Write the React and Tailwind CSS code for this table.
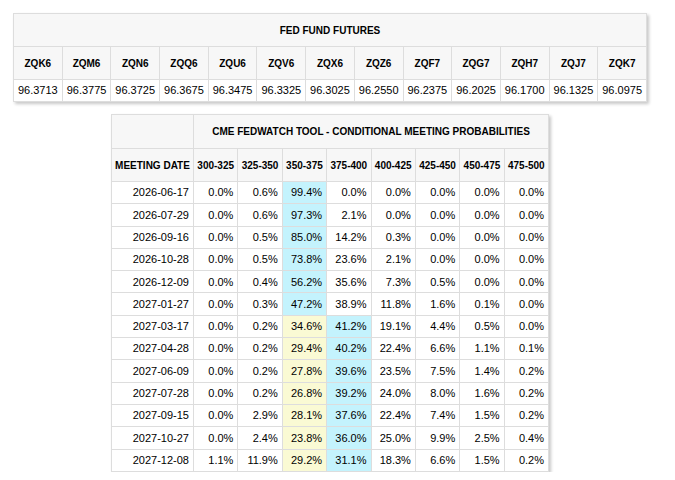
import React from "react";

const futures = [
  ["ZQK6", "96.3713"],
  ["ZQM6", "96.3775"],
  ["ZQN6", "96.3725"],
  ["ZQQ6", "96.3675"],
  ["ZQU6", "96.3475"],
  ["ZQV6", "96.3325"],
  ["ZQX6", "96.3025"],
  ["ZQZ6", "96.2550"],
  ["ZQF7", "96.2375"],
  ["ZQG7", "96.2025"],
  ["ZQH7", "96.1700"],
  ["ZQJ7", "96.1325"],
  ["ZQK7", "96.0975"],
];

const ranges = ["300-325", "325-350", "350-375", "375-400", "400-425", "425-450", "450-475", "475-500"];

const rows = [
  ["2026-06-17", ["0.0", "0.6", "99.4", "0.0", "0.0", "0.0", "0.0", "0.0"]],
  ["2026-07-29", ["0.0", "0.6", "97.3", "2.1", "0.0", "0.0", "0.0", "0.0"]],
  ["2026-09-16", ["0.0", "0.5", "85.0", "14.2", "0.3", "0.0", "0.0", "0.0"]],
  ["2026-10-28", ["0.0", "0.5", "73.8", "23.6", "2.1", "0.0", "0.0", "0.0"]],
  ["2026-12-09", ["0.0", "0.4", "56.2", "35.6", "7.3", "0.5", "0.0", "0.0"]],
  ["2027-01-27", ["0.0", "0.3", "47.2", "38.9", "11.8", "1.6", "0.1", "0.0"]],
  ["2027-03-17", ["0.0", "0.2", "34.6", "41.2", "19.1", "4.4", "0.5", "0.0"]],
  ["2027-04-28", ["0.0", "0.2", "29.4", "40.2", "22.4", "6.6", "1.1", "0.1"]],
  ["2027-06-09", ["0.0", "0.2", "27.8", "39.6", "23.5", "7.5", "1.4", "0.2"]],
  ["2027-07-28", ["0.0", "0.2", "26.8", "39.2", "24.0", "8.0", "1.6", "0.2"]],
  ["2027-09-15", ["0.0", "2.9", "28.1", "37.6", "22.4", "7.4", "1.5", "0.2"]],
  ["2027-10-27", ["0.0", "2.4", "23.8", "36.0", "25.0", "9.9", "2.5", "0.4"]],
  ["2027-12-08", ["1.1", "11.9", "29.2", "31.1", "18.3", "6.6", "1.5", "0.2"]],
];

function cellBg(rowIdx, colIdx) {
  if (colIdx === 2) return rowIdx < 6 ? "bg-[#c4f3fd]" : "bg-[#fafad4]";
  if (colIdx === 3 && rowIdx >= 6) return "bg-[#c4f3fd]";
  return "bg-white";
}

export default function App() {
  return (
    <div className="w-[660px] flex flex-col items-center pt-[13px] gap-[12px] text-black bg-white font-['Liberation_Sans',Arial,sans-serif]">
      <table className="w-[634px] table-fixed border-collapse shadow-[2px_2px_3px_rgba(0,0,0,0.22)]">
        <thead>
          <tr className="h-[33px]">
            <th
              colSpan={13}
              className="border border-[#dddddd] bg-[#f7f7f7] text-[10px] font-bold text-center p-0"
            >
              FED FUND FUTURES
            </th>
          </tr>
          <tr className="h-[33px]">
            {futures.map(([c]) => (
              <th
                key={c}
                className="border border-[#dddddd] bg-[#f7f7f7] text-[10px] font-bold text-center p-0"
              >
                {c}
              </th>
            ))}
          </tr>
        </thead>
        <tbody>
          <tr className="h-[22px]">
            {futures.map(([c, v]) => (
              <td key={c} className="border border-[#dddddd] bg-white text-[11px] text-center p-0">
                {v}
              </td>
            ))}
          </tr>
        </tbody>
      </table>

      <table className="w-[438px] table-fixed border-collapse shadow-[2px_2px_3px_rgba(0,0,0,0.22)]">
        <thead>
          <tr className="h-[34px]">
            <th className="w-[82px] border border-[#dddddd] bg-[#f7f7f7] p-0"></th>
            <th
              colSpan={8}
              className="border border-[#dddddd] bg-[#f7f7f7] text-[10px] font-bold text-center p-0"
            >
              CME FEDWATCH TOOL - CONDITIONAL MEETING PROBABILITIES
            </th>
          </tr>
          <tr className="h-[33px]">
            <th className="border border-[#dddddd] bg-[#f7f7f7] text-[10px] font-bold text-center p-0 whitespace-nowrap">
              MEETING DATE
            </th>
            {ranges.map((r) => (
              <th
                key={r}
                className="border border-[#dddddd] bg-[#f7f7f7] text-[10px] font-bold text-center p-0 whitespace-nowrap"
              >
                {r}
              </th>
            ))}
          </tr>
        </thead>
        <tbody>
          {rows.map(([date, vals], ri) => (
            <tr key={date} className="h-[22.3px]">
              <td className="border border-[#dddddd] bg-white text-[11px] text-right pr-[4px] py-0">
                {date}
              </td>
              {vals.map((v, ci) => (
                <td
                  key={ci}
                  className={`border border-[#dddddd] ${cellBg(ri, ci)} text-[11px] text-right pr-[4px] py-0`}
                >
                  {v}%
                </td>
              ))}
            </tr>
          ))}
        </tbody>
      </table>
    </div>
  );
}
